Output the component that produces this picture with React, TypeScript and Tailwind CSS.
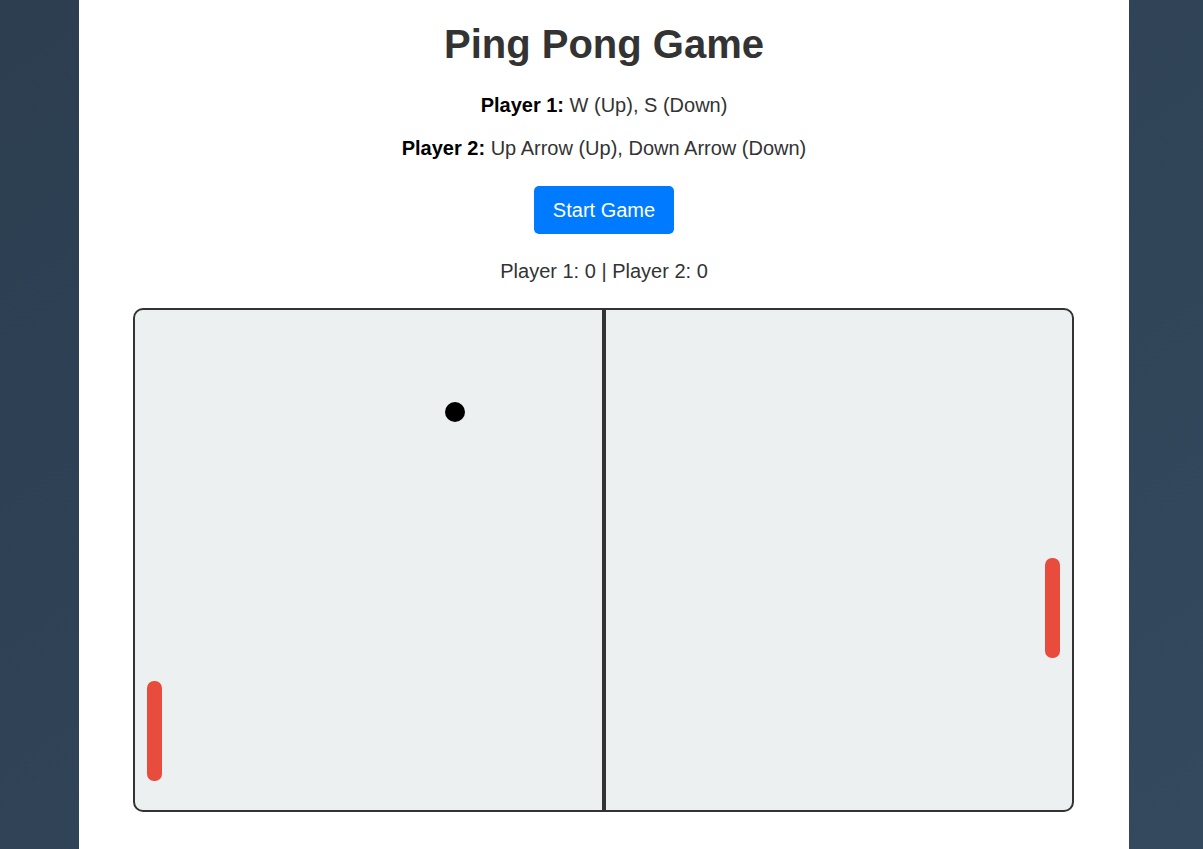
export default function App() {
  return (
    <div className="min-h-screen w-full bg-gradient-to-br from-[#2c3e50] to-[#34495e] font-['Liberation_Sans',Arial,sans-serif]">
      <div className="ml-[79px] flex min-h-screen w-[1050px] flex-col items-center bg-white">
        <h1 className="mt-[20px] h-[48px] text-[40px] font-bold leading-[48px] text-[#333]">Ping Pong Game</h1>
        <p className="mt-[25px] text-[20px] leading-[24px] text-[#333]">
          <strong className="font-bold text-black">Player 1:</strong> W (Up), S (Down)
        </p>
        <p className="mt-[19px] text-[20px] leading-[24px] text-[#333]">
          <strong className="font-bold text-black">Player 2:</strong> Up Arrow (Up), Down Arrow (Down)
        </p>
        <button className="mt-[26px] flex h-[48px] w-[140px] items-center justify-center rounded-[5px] bg-[#007bff] text-[20px] text-white">
          Start Game
        </button>
        <div className="mt-[25px] h-[24px] text-[20px] leading-[24px] text-[#333]">Player 1: 0 | Player 2: 0</div>
        <div className="relative mt-[25px] ml-[54px] h-[504px] w-[941px] self-start rounded-[10px] border-2 border-[#333] bg-[#ecf0f1]">
          <div className="absolute top-0 bottom-0 left-[467px] w-[4px] bg-[#333]" />
          <div className="absolute left-[310px] top-[92px] h-[20px] w-[20px] rounded-full bg-black" />
          <div className="absolute left-[12px] top-[371px] h-[100px] w-[15px] rounded-[7px] bg-[#e74c3c]" />
          <div className="absolute left-[910px] top-[248px] h-[100px] w-[15px] rounded-[7px] bg-[#e74c3c]" />
        </div>
      </div>
    </div>
  );
}
